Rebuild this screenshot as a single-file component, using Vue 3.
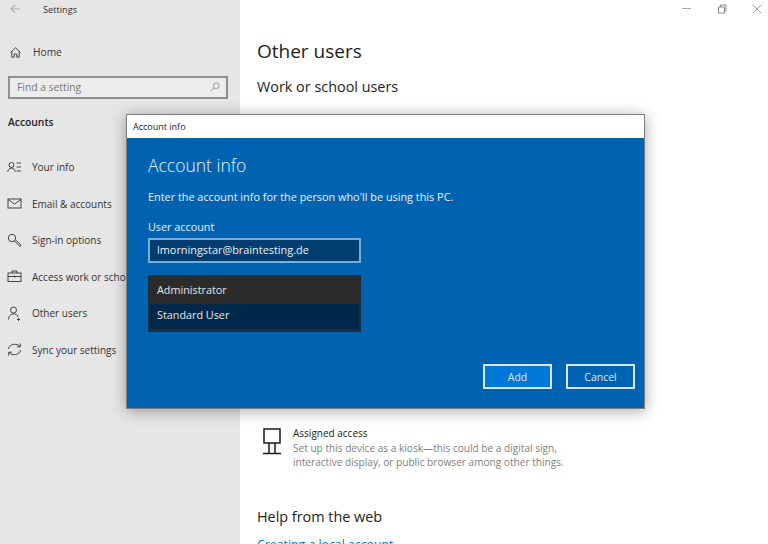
<script setup>
const navItems = [
  { label: 'Your info', icon: 'info' },
  { label: 'Email & accounts', icon: 'mail' },
  { label: 'Sign-in options', icon: 'key' },
  { label: 'Access work or school', icon: 'case' },
  { label: 'Other users', icon: 'user' },
  { label: 'Sync your settings', icon: 'sync' }
]
</script>

<template>
  <div class="page">
    <aside class="sidebar">
      <div class="titlebar">
        <svg class="back" width="10" height="10" viewBox="0 0 10 10" fill="none" stroke="#b0b0b0" stroke-width="1.1"><path d="M10 5H1M5 1 1 5l4 4" /></svg>
        <span class="app-title">Settings</span>
      </div>
      <div class="home">
        <svg width="11" height="11" viewBox="0 0 11 11" fill="none" stroke="#333" stroke-width="0.9"><path d="M.5 5.500 5.500.8l5 4.700M1.800 4.500V10.200H4.200V7H6.800V10.200H9.200V4.500" /></svg>
        <span>Home</span>
      </div>
      <div class="search">
        <span>Find a setting</span>
        <svg width="10" height="10" viewBox="0 0 12 12" fill="none" stroke="#8a8a8a" stroke-width="1"><circle cx="7.500" cy="4.500" r="3.500" /><path d="M5 7 1 11" /></svg>
      </div>
      <div class="section">Accounts</div>
      <nav class="nav">
        <div v-for="item in navItems" :key="item.label" class="nav-row">
          <svg width="15" height="15" viewBox="0 0 15 15" fill="none" stroke="#333" stroke-width="0.9">
            <template v-if="item.icon === 'info'">
              <circle cx="4.500" cy="5" r="2.500" /><path d="M.8 12c0-5 7.400-5 7.400 0M9.500 3H14M9.500 7H14M9.500 11H14" />
            </template>
            <template v-else-if="item.icon === 'mail'">
              <rect x="1" y="3" width="13" height="9" /><path d="M1 3.500 7.500 8 14 3.500" />
            </template>
            <template v-else-if="item.icon === 'key'">
              <circle cx="5" cy="5" r="3.700" /><path d="M7.500 8 13 13.500 14 12 8.500 7" />
            </template>
            <template v-else-if="item.icon === 'case'">
              <rect x="1" y="4" width="13" height="8.500" /><path d="M5 4V2H10V4M1 7.500H14M7.500 6.500V8.500" />
            </template>
            <template v-else-if="item.icon === 'user'">
              <circle cx="6.500" cy="4" r="3" /><path d="M1.500 13.500C1.500 6.500 10.500 6.500 11 11M11.500 12V15M10 13.500H13" />
            </template>
            <template v-else>
              <path d="M1.500 7C2 1.800 10 .8 13 4.500M13.500 8C13 13.200 5 14.200 2 10.500M13.300 1.500V4.800H10M1.700 13.500V10.200H5" />
            </template>
          </svg>
          <span>{{ item.label }}</span>
        </div>
      </nav>
    </aside>

    <main class="content">
      <div class="window-controls">
        <svg width="10" height="10" viewBox="0 0 10 10" fill="none" stroke="#a8a8a8"><path d="M0 4.500H9" /></svg>
        <svg width="10" height="10" viewBox="0 0 10 10" fill="none" stroke="#8a8a8a"><path d="M1.500 3H7.500V9H1.500ZM3.500 3V1H9V7H7.500" /></svg>
        <svg width="10" height="10" viewBox="0 0 10 10" fill="none" stroke="#a0a0a0"><path d="M1 1 9 9M9 1 1 9" /></svg>
      </div>
      <h1>Other users</h1>
      <h2>Work or school users</h2>
      <div class="assigned">
        <svg width="20" height="27" viewBox="0 0 20 27" fill="none" stroke="#1a1a1a" stroke-width="1.500"><path d="M2 1H18V15H2ZM7 15V25M13 15V25M1 25.500H19" /></svg>
        <div class="assigned-text">
          <div class="assigned-title">Assigned access</div>
          <div class="assigned-desc">Set up this device as a kiosk—this could be a digital sign, interactive display, or public browser among other things.</div>
        </div>
      </div>
      <h2 class="help">Help from the web</h2>
      <div class="link">Creating a local account</div>
    </main>

    <section class="dialog">
      <div class="dialog-title">Account info</div>
      <div class="dialog-body">
        <h3>Account info</h3>
        <p class="lead">Enter the account info for the person who'll be using this PC.</p>
        <label>User account</label>
        <div class="field">lmorningstar@braintesting.de</div>
        <div class="listbox">
          <div class="option">Administrator</div>
          <div class="option selected">Standard User</div>
        </div>
        <div class="actions">
          <button class="primary">Add</button>
          <button>Cancel</button>
        </div>
      </div>
    </section>
  </div>
</template>

<style>
html, body { margin: 0; padding: 0; }
</style>

<style scoped>
.page {
  position: relative;
  display: flex;
  width: 768px;
  height: 544px;
  overflow: hidden;
  background: #fff;
  font-family: "Open Sans", "Noto Sans", sans-serif;
  color: #1a1a1a;
}
.sidebar {
  width: 240px;
  flex: none;
  background: #e6e6e6;
  display: flex;
  flex-direction: column;
}
.titlebar {
  display: flex;
  align-items: center;
  height: 18px;
  padding-left: 10px;
  gap: 23px;
}
.app-title { font-size: 9.200px; color: #333; }
.home {
  display: flex;
  align-items: center;
  gap: 12px;
  margin-top: 25px;
  padding-left: 10px;
  height: 18px;
  font-size: 10.200px;
  color: #333;
}
.search {
  margin: 15px 12px 0 8px;
  height: 23px;
  box-sizing: border-box;
  border: 2px solid #8f8f8f;
  background: #ececec;
  display: flex;
  align-items: center;
  justify-content: space-between;
  padding: 0 6px 1px 7px;
  font-size: 10.300px;
  color: #777;
}
.section {
  margin: 14px 0 0 8px;
  height: 18px;
  line-height: 18px;
  font-size: 10.300px;
  font-weight: 600;
  color: #222;
}
.nav {
  display: flex;
  flex-direction: column;
  gap: 18.500px;
  margin-top: 27px;
}
.nav-row {
  display: flex;
  align-items: center;
  gap: 10px;
  height: 18px;
  padding-left: 7px;
  font-size: 10px;
  color: #333;
  white-space: nowrap;
}
.content {
  flex: 1;
  display: flex;
  flex-direction: column;
  padding-left: 17px;
  min-width: 0;
}
.content > * { flex: none; }
.window-controls {
  display: flex;
  gap: 25px;
  justify-content: flex-end;
  align-items: center;
  height: 18px;
  padding-right: 6px;
}
h1 {
  margin: 19px 0 0;
  font-size: 19px;
  line-height: 28px;
  font-weight: 400;
  color: #222;
}
h2 {
  margin: 11px 0 0;
  font-size: 14.400px;
  line-height: 22px;
  font-weight: 400;
  color: #222;
}
.assigned {
  display: flex;
  gap: 11px;
  margin: 327px 0 0 5px;
}
.assigned svg { margin-top: 3px; flex: none; }
.assigned-text { width: 290px; }
.assigned-title { font-size: 10px; line-height: 16px; color: #222; }
.assigned-desc { font-size: 10.100px; line-height: 14px; color: #808080; }
.help { margin-top: 37px; }
.link {
  margin-top: 10px;
  font-size: 12.300px;
  line-height: 14px;
  color: #0078d7;
}
.dialog {
  position: absolute;
  left: 126px;
  top: 114px;
  width: 519px;
  height: 295px;
  box-sizing: border-box;
  border: 1px solid #7f7f7f;
  background: #0063b1;
  box-shadow: 0 2px 14px rgba(0, 0, 0, 0.35);
  display: flex;
  flex-direction: column;
  color: #fff;
}
.dialog-title {
  height: 23px;
  flex: none;
  background: #fff;
  color: #222;
  font-size: 9px;
  line-height: 23px;
  padding-left: 6px;
}
.dialog-body {
  flex: 1;
  position: relative;
  display: flex;
  flex-direction: column;
  padding: 14px 9px 0 21px;
}
h3 {
  margin: 0;
  font-size: 17.500px;
  line-height: 26px;
  font-weight: 300;
  color: #e8f1f8;
}
.lead {
  margin: 11px 0 0;
  font-size: 10.870px;
  line-height: 16px;
  color: #e8f1f8;
}
label {
  margin-top: 14px;
  font-size: 10.800px;
  line-height: 16px;
  color: #e8f1f8;
}
.field {
  margin-top: 3px;
  width: 213px;
  height: 25px;
  box-sizing: border-box;
  border: 2px solid #79aedb;
  background: #003e6f;
  font-size: 10.900px;
  line-height: 20px;
  padding-left: 7px;
  color: #f0f0f0;
}
.listbox {
  margin-top: 12px;
  width: 213px;
  height: 57px;
  box-sizing: border-box;
  border: 1px solid #222c36;
  border-width: 1px 2px 3px;
  background: #2b2b2b;
  padding-top: 2px;
}
.option {
  height: 26px;
  line-height: 24px;
  font-size: 10.800px;
  padding-left: 7px;
  color: #e6e6e6;
}
.option.selected { background: #00284a; height: 25px; line-height: 22px; }
.actions {
  display: flex;
  justify-content: flex-end;
  gap: 14px;
  margin-top: 32px;
}
button {
  width: 69px;
  height: 25px;
  box-sizing: border-box;
  border: 2px solid #d8e6f2;
  background: #0063b1;
  color: #dfeaf4;
  font: inherit;
  font-size: 10.500px;
  padding: 0;
}
button.primary { background: #0078d7; }
</style>
